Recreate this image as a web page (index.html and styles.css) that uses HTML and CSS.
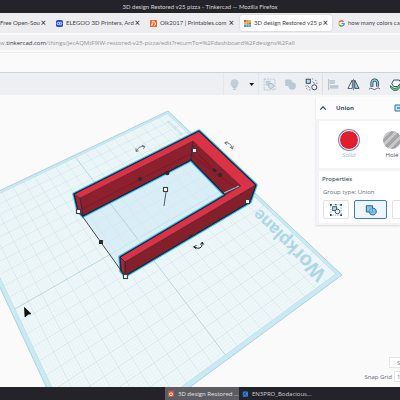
FILE: index.html
```html
<!DOCTYPE html>
<html lang="en">
<head>
<meta charset="utf-8">
<title>3D design Restored v25 pizza - Tinkercad</title>
<link rel="stylesheet" href="styles.css">
</head>
<body>
<header class="titlebar">3D design Restored v25 pizza - Tinkercad — Mozilla Firefox</header>
<nav class="tabs">
  <div class="tab tab-first"><a href="#">Free Open-Sou</a><button aria-label="Close">×</button></div>
  <div class="tab">
    <svg class="fav" viewBox="0 0 8 8"><rect width="8" height="8" rx="2" fill="#2450d8"/><path d="M3.8 2.7H2.6a1.3 1.3 0 000 2.6h1.2zM4.4 2.7h1a1.3 1.3 0 010 2.6h-1z" fill="none" stroke="#fff" stroke-width=".8"/></svg>
    <a href="#">ELEGOO 3D Printers, Ard</a><button aria-label="Close">×</button></div>
  <div class="tab">
    <svg class="fav" viewBox="0 0 8 8"><rect width="8" height="8" rx="1" fill="#f5652a"/><path d="M2.2 1.5h2l2 1.7v2L4.2 6.7M2 3.7l2-.6M2 6.7V5l2-.6" fill="none" stroke="#fff" stroke-width="1"/></svg>
    <a href="#">Olk2017 | Printables.com</a><button aria-label="Close">×</button></div>
  <div class="tab active">
    <svg class="fav" viewBox="0 0 8 8"><rect x="0" y="0" width="2.6" height="2.6" fill="#e8523f"/><rect x="2.7" y="0" width="2.6" height="2.6" fill="#f08a35"/><rect x="5.4" y="0" width="2.6" height="2.6" fill="#f4b13e"/><rect x="0" y="2.7" width="2.6" height="2.6" fill="#f2a53a"/><rect x="2.7" y="2.7" width="2.6" height="2.6" fill="#7cba55"/><rect x="5.4" y="2.7" width="2.6" height="2.6" fill="#e05a48"/><rect x="0" y="5.4" width="2.6" height="2.6" fill="#3f9bd8"/><rect x="2.7" y="5.4" width="2.6" height="2.6" fill="#3cae9c"/><rect x="5.4" y="5.4" width="2.6" height="2.6" fill="#52a8dd"/></svg>
    <a href="#">3D design Restored v25 p</a><button aria-label="Close">×</button></div>
  <div class="tab tab-last">
    <svg class="fav" viewBox="0 0 8 8"><g fill="none" stroke-width="1.4"><path d="M6.2 2A3 3 0 001.5 2.5" stroke="#ea4335"/><path d="M1.5 2.4a3 3 0 000 3.2" stroke="#fbbc05"/><path d="M1.5 5.5a3 3 0 004.4.8" stroke="#34a853"/><path d="M4.1 4H7a3 3 0 01-1.1 2.4" stroke="#4285f4"/></g></svg>
    <a href="#">how many colors can</a></div>
</nav>
<div class="address"><span>w.<b>tinkercad.com</b>/things/jecAQMtF9IW-restored-v25-pizza/edit?returnTo=%2Fdashboard%2Fdesigns%2Fall</span></div>
<div class="spacer"></div>
<div class="toolbar">
  <button class="tool tool-bulb" aria-label="Show all"><svg viewBox="0 0 14 14"><circle cx="7" cy="5.6" r="4.2" fill="#c3ced6"/><path d="M4.5 8.5h5L8.7 11H5.3zM5.5 11.5h3v1.3h-3z" fill="#bbc7d0"/></svg></button>
  <button class="tool tool-drop" aria-label="Visibility menu"><svg viewBox="0 0 14 14"><path d="M4.7 5.5h5L7.2 8.5z" fill="#111"/></svg></button>
  <button class="tool tool-group" aria-label="Group"><svg viewBox="0 0 14 14"><path d="M1.2 1.2h11.6v11.6H1.2z" fill="none" stroke="#b4c2cc" stroke-width="1" stroke-dasharray="2 1"/><rect x="3" y="3" width="5" height="5" fill="#c1cdd5"/><circle cx="8.6" cy="8.5" r="2.7" fill="#d7dfe4" stroke="#a9b9c4"/></svg></button>
  <button class="tool tool-union" aria-label="Union group"><svg viewBox="0 0 14 14"><rect x="1.3" y="1.7" width="7" height="7" rx="1" fill="#b9c8d2"/><circle cx="8.8" cy="8.7" r="4" fill="#b9c8d2"/></svg></button>
  <button class="tool tool-ungroup" aria-label="Ungroup"><svg viewBox="0 0 14 14"><rect x="1.3" y="1.3" width="4.4" height="4.4" fill="#aee0f5" stroke="#2b4053"/><circle cx="10" cy="10" r="2.7" fill="#f5f8fa" stroke="#2b4053"/><path d="M7.5 1h1.3M11 2l1.5 1.5M8 4l3 2M12.7 5v1.5M1 8v1.5M3 8l2 3M1.5 11l1 1.3M4.5 12.8H6" fill="none" stroke="#425668" stroke-width=".7"/></svg></button>
  <button class="tool tool-align" aria-label="Align"><svg viewBox="0 0 14 14"><path d="M1.8 1v12" stroke="#a9b9c4"/><rect x="3.2" y="2.5" width="5" height="3.5" fill="#c5d0d8" stroke="#afbec9" stroke-width=".7"/><rect x="3.2" y="7.7" width="9" height="3.7" fill="#b9c8d2"/></svg></button>
  <button class="tool" aria-label="Mirror"><svg viewBox="0 0 14 14"><path d="M5.7 2.2v9H1z" fill="#fff" stroke="#2b4053" stroke-width=".9"/><path d="M8.3 2.2v9H13z" fill="#8fd0ed" stroke="#2b4053" stroke-width=".9"/><path d="M7 .8v12.4" stroke="#2b4053" stroke-width=".6"/></svg></button>
  <button class="tool" aria-label="Cruise"><svg viewBox="0 0 14 14"><path d="M4.2 9.5V5.2a3 3 0 016 0v4" fill="none" stroke="#2b4053" stroke-width="3.2"/><path d="M4.2 9V5.2a3 3 0 016 0V9" fill="none" stroke="#87c8e8" stroke-width="1.5"/><path d="M1 12q2-2 4-.3t4-.2 4 .3" fill="none" stroke="#2b4053" stroke-width=".8"/></svg></button>
  <button class="tool" aria-label="Dimensions"><svg viewBox="0 0 14 14"><path d="M5 2.2h6l2 3-4 4H5L3 6z" fill="#fff" stroke="#2b4053"/><path d="M1.5 8.2l4 3.2 4-1 3-3.2.3 2-3.8 4-4 .3-3.2-2.8z" fill="#65c58c" stroke="#245c44" stroke-width=".8"/></svg></button>
</div>
<main class="stage">
  <svg class="scene" viewBox="0 95 400 292" preserveAspectRatio="xMinYMin slice" role="img" aria-label="Workplane with a red frame">
    <polygon points="168,111 342,275 83,466 -37,208" fill="#c9e9f3" stroke="#9dcbd9" stroke-width=".8"/>
    <polygon id="plane" fill="#eff7f9" stroke="#b5dce6" stroke-width=".6"/>
    <path id="fine" class="fine"/>
    <path id="coarse" class="coarse"/>
    <path id="axes" class="axes"/>
    <text class="plane-name" transform="translate(327 273) rotate(224)"><tspan class="s1">Wor</tspan><tspan class="s2">kpl</tspan><tspan class="s3">ane</tspan></text>
    <text class="plane-small" transform="translate(183 134) rotate(223)">Workplane</text>
    <polygon points="83,216 191,160 226,195 121,257 125,276" fill="#cfe9f4" opacity=".65"/>
    <path d="M101 192L137 238" class="axes"/>
    <path d="M74 194L199 131 256 185 250 202 125 276 121 271 120 257 225 195 191 160 83 216 78 211Z" fill="none" stroke="#27bfe9" stroke-width="3.4" stroke-linejoin="round"/>
    <g stroke="#19253f" stroke-width=".7" stroke-linejoin="round">
      <polygon points="80,198 193,141 191,160 83,216" fill="#8c202c"/>
      <polygon points="74,194 80,198 83,216 78,211" fill="#a12733"/>
      <polygon points="193,141 241,186 225,195 191,160" fill="#8b1f2b"/>
      <path d="M74 194L199 131 256 185 125 262 120 257 241 186 193 141 80 198Z" fill="#dc3246" stroke="#7b1c2c"/>
      <polygon points="125,262 256,185 250,202 125,276" fill="#84202a" stroke-width=".5"/>
      <polygon points="120,257 125,262 125,276 121,271" fill="#a32734"/>
      <path d="M78 211L74 194 199 131 256 185 250 202 125 276 121 271 120 257 225 195M83 216L191 160 225 195M83 216l-5-5" fill="none" stroke-width="1.1"/>
    </g>
    <path d="M224 193l15-7" stroke="#65cce8" stroke-width="1.2"/>
    <path d="M82 209L190 154 236 188" fill="none" stroke="#5d1721" stroke-width=".6" opacity=".7"/>
    <path d="M80 213L125 276" stroke="#333" stroke-width=".9"/>
    <path d="M166 192l-2 14" stroke="#333" stroke-width=".8"/>
    <path d="M199 155l13 13" stroke="#4c121b" stroke-width=".7" stroke-dasharray="2 1"/>
    <g fill="#2b2b2d"><rect x="99" y="240" width="4" height="4"/><circle cx="140" cy="179" r="2"/><circle cx="167.3" cy="173" r="2.2"/><path d="M188 237l4-3 0 3z"/><circle cx="220" cy="175" r="2"/><path d="M212 168l4 1 1 3-4-1z"/></g>
    <g fill="#fff" stroke="#3d3d3f" stroke-width="1.1"><rect x="76.5" y="209.5" width="4" height="4"/><rect x="123.5" y="274.500" width="4" height="4"/><rect x="245.5" y="199.5" width="4" height="4"/><rect x="192.5" y="148.5" width="4" height="4"/><rect x="163.5" y="187.5" width="4" height="4"/></g>
    <g fill="none" stroke="#555" stroke-width=".8"><path d="M136.500 151q2-5 7.500-4.500M136 148.500v3l2.500-.7M141.800 145.300l3 1-1.200 2.500"/><path d="M225.500 143q5-1 6.500 5M227.500 141.500l-2.800 1.400 2 2M230 147l2.400 2 .9-3"/></g>
    <path d="M194.5 247q7 4 8-4M196.500 245.500l-3 1.300 2.800 2M200.500 244.500l1.700-2.500 1.500 2.500" fill="none" stroke="#222"/>
    <path d="M24.500 307.500l6.500 6.300-2.700.4L25 317z" fill="#111" stroke="#111" stroke-width=".8"/>
  </svg>
  <aside class="panel">
    <div class="panel-head">
      <button class="chevron" aria-label="Collapse"><svg viewBox="0 0 8 8"><path d="M1.2 5.6L4 2.800l2.800 2.800" fill="none" stroke="#30475e" stroke-width="1.2"/></svg></button>
      <h2>Union</h2>
      <button class="lock" aria-label="Lock"><svg viewBox="0 0 6 8"><path d="M7 1H1v6h6" fill="#c6e8f7" stroke="#2d6fa3"/><path d="M3 3h3v2H3z" fill="#5b9cc7"/></svg></button>
    </div>
    <div class="card swatches">
      <button class="swatch"><span class="dot solid"></span><span class="name chosen">Solid</span></button>
      <button class="swatch"><span class="dot hole"></span><span class="name">Hole</span></button>
    </div>
    <div class="card props">
      <h3>Properties</h3>
      <p>Group type: Union</p>
      <div class="types">
        <button aria-label="Group"><svg viewBox="0 0 14 14"><path d="M1 1h12v12H1z" fill="none" stroke="#58a9d4" stroke-dasharray="1.5 1.5"/><path d="M0 0h2v2H0zM12 0h2v2h-2zM0 12h2v2H0zM12 12h2v2h-2zM6 0h1.5v1.5H6z" fill="#2b4053"/><rect x="3.2" y="3.2" width="4.6" height="4.6" fill="#b5def2" stroke="#2b4053"/><circle cx="8.7" cy="8.7" r="2.7" fill="#f3fafe" stroke="#2b4053"/></svg></button>
        <button class="picked" aria-label="Union"><svg viewBox="0 0 14 14"><path d="M1.500 2h7.300v2.800A4 4 0 118 12.600 4 4 0 014.800 9.300H1.500z" fill="#82c3e8" stroke="#25507a"/><path d="M8.800 4.800a4 4 0 00-4 4.500h4z" fill="none" stroke="#4289b8" stroke-width=".7"/></svg></button>
        <button aria-label="Intersection"><svg viewBox="0 0 14 14"><path d="M2 12V4.500h7" fill="none" stroke="#9aaab5" stroke-dasharray="1.500 1"/><path d="M4 10l3-3" stroke="#9aaab5"/></svg></button>
      </div>
    </div>
  </aside>
  <div class="grid-tools">
    <button class="field settings">Settings</button>
    <div class="snap"><label for="snap">Snap Grid</label><input id="snap" class="field" value="1.0 mm"></div>
  </div>
</main>
<footer class="taskbar">
  <button class="task current"><svg viewBox="0 0 8 8"><rect width="8" height="8" rx="1.5" fill="#e2503e"/><circle cx="4" cy="4.3" r="2" fill="none" stroke="#fff" stroke-width="1.3"/><path d="M4 1v2" stroke="#e2503e"/></svg><span>3D design Restored …</span></button>
  <button class="task"><svg viewBox="0 0 8 8"><rect x="1" y=".5" width="7" height="7" rx="1" fill="#2f82e6"/><path d="M6 2L3 4l3 2M0 2.500h2M0 5.500h2" fill="none" stroke="#12345c" stroke-width="1"/></svg><span>EN3PRO_Bodacious…</span></button>
</footer>
<script src="grid.js"></script>
</body>
</html>
```
FILE: styles.css
```css
* { box-sizing: border-box; }
html, body { height: 100%; }
body {
  margin: 0;
  display: flex;
  flex-direction: column;
  overflow: hidden;
  background: #fafafb;
  color: #45454a;
  font: 6px/8px "Open Sans", "Noto Sans", sans-serif;
}
button { margin: 0; padding: 0; border: 0; background: none; color: inherit; font: inherit; }
a { color: inherit; text-decoration: none; }
svg { display: block; flex: none; }
h2, h3, p { margin: 0; }

.titlebar {
  flex: none;
  height: 13px;
  background: #242329;
  color: #d4d4d6;
  font-family: Lato, sans-serif;
  line-height: 13px;
  text-align: center;
}
.tabs {
  flex: none;
  display: grid;
  grid-template-columns: 50px 94px 94px 98px 1fr;
  height: 20px;
  padding: 2px 0;
  background: #ededf0;
  font-family: Lato, sans-serif;
}
.tab {
  display: flex;
  align-items: center;
  gap: 3px;
  min-width: 0;
  padding: 0 4px 0 6px;
}
.tab a { flex: 1; min-width: 0; white-space: nowrap; }
.tab button { font-size: 9px; color: #222; }
.tab-first { padding: 0 4px 0 0; }
.tab-last { padding: 0 0 0 2px; }
.tab.active { margin: 0 4px 0 2px; padding: 0 4px; background: #fff; border-radius: 3px; box-shadow: 0 0 2px #bbb; }
.fav { width: 7px; height: 7px; }
.address {
  flex: none;
  height: 19px;
  padding: 2px 0;
  background: #fafafb;
  color: #929297;
  white-space: nowrap;
}
.address span { display: block; height: 15px; line-height: 17px; background: #f1f1f3; }
.address b { color: #333338; font-weight: 400; }
.spacer { flex: none; height: 20px; border-top: 1px solid #ececee; }
.toolbar {
  flex: none;
  display: flex;
  justify-content: flex-end;
  height: 23px;
  margin-right: -6px;
  border-top: 1px solid #cdd3d9;
  background: #eeeff2;
}
.tool { display: grid; place-items: center; width: 21px; }
.tool svg { width: 13px; height: 13px; }
.tool-bulb { border-left: 1px solid #e3e6ea; }
.tool-drop { width: 14px; }
.tool-group { border-left: 1px solid #e3e6ea; width: 22px; }
.tool-align { border-left: 1px solid #dde1e5; }

.stage { flex: 1; min-height: 0; position: relative; overflow: hidden; background: #fafafb; }
.scene { width: 100%; height: 100%; }
.fine { fill: none; stroke: #bcdfe8; stroke-width: 1; opacity: .1; }
.coarse { fill: none; stroke: #b2d0d8; stroke-width: 1; opacity: .25; }
.axes { fill: none; stroke: #9fc4cf; stroke-width: 1; opacity: .5; }
.plane-name { fill: #acd7e3; font-family: "Liberation Sans", sans-serif; font-weight: 700; }
.s1 { font-size: 20px; }
.s2 { font-size: 18px; }
.s3 { font-size: 17px; }
.plane-small { fill: #b9dbe5; font: 700 4px "Liberation Sans", sans-serif; }

.panel {
  position: absolute;
  top: 2px;
  right: 0;
  width: 84px;
  padding-bottom: 2px;
  overflow: hidden;
  background: #f3f4f5;
  box-shadow: 0 1px 2px #d5d8da;
}
.panel-head { display: flex; align-items: center; height: 22px; padding: 0 0 0 3px; background: #fcfcfd; }
.panel-head h2 { flex: 1; padding-left: 9px; font-size: 6px; font-weight: 700; color: #3c4d60; }
.chevron svg { width: 8px; height: 8px; }
.lock svg { width: 6px; height: 8px; }
.card { background: #fff; margin-left: 3px; }
.swatches { display: flex; gap: 19px; height: 47px; margin-top: 2px; padding: 9px 0 0 18px; }
.swatch { display: flex; flex: none; flex-direction: column; align-items: center; gap: 1px; width: 24px; }
.dot { width: 20px; height: 20px; border-radius: 50%; border: 1px solid #fff; }
.solid { background: #e41d2d; box-shadow: 0 0 0 1px #6b8dd0; }
.hole { background: repeating-linear-gradient(135deg, #a6a6a8 0 3px, #c8c8ca 3px 6px); }
.name { color: #46515e; }
.chosen { color: #8fbbe6; }
.props { margin-top: 3px; padding: 4px 0 4px 3px; }
.props h3 { font-size: 6px; font-weight: 600; color: #4b5663; }
.props p { padding: 5px 0 4px 1px; color: #667079; }
.types { display: flex; gap: 5px; padding-left: 1px; }
.types button { display: grid; flex: none; place-items: center; width: 26px; height: 19px; border: 1px solid #e0e4e8; border-radius: 2px; }
.types .picked { width: 33px; border-color: #4179c4; background: #eef6fd; }
.types svg { width: 12px; height: 12px; }

.grid-tools { position: absolute; right: 0; bottom: 5px; display: grid; gap: 3px; width: 36px; overflow: hidden; justify-items: end; }
.field { height: 11px; border: 1px solid #e3e5e7; border-right: 0; background: #fff; color: #777d86; font: inherit; overflow: hidden; text-align: left; }
.settings { width: 11px; padding: 0 0 0 7px; }
.snap { display: flex; align-items: center; gap: 2px; white-space: nowrap; color: #666d7b; }
.snap .field { width: 6px; padding: 0 0 0 2px; }
.snap label { flex: none; }

.taskbar { flex: none; display: flex; justify-content: center; height: 13px; padding-left: 78px; background: #242329; color: #cfcfd2; }
.task { display: flex; align-items: center; gap: 4px; width: 74px; padding-left: 3px; white-space: nowrap; }
.task svg { width: 6px; height: 6px; }
.current { background: #5c5c61; color: #e6e6e8; }
```
FILE: grid.js
```js
// Perspective map from the unit square to the four workplane corners.
const [p0, p1, p2, p3] = [[168, 111], [342, 275], [83, 466], [-37, 208]];
const dx1 = p1[0] - p2[0], dx2 = p3[0] - p2[0], sx = p0[0] - p1[0] + p2[0] - p3[0];
const dy1 = p1[1] - p2[1], dy2 = p3[1] - p2[1], sy = p0[1] - p1[1] + p2[1] - p3[1];
const det = dx1 * dy2 - dx2 * dy1;
const g = (sx * dy2 - dx2 * sy) / det;
const h = (dx1 * sy - sx * dy1) / det;
function project(u, v) {
  const w = g * u + h * v + 1;
  return [0, 1].map(i => (((p1[i] - p0[i] + g * p1[i]) * u + (p3[i] - p0[i] + h * p3[i]) * v + p0[i]) / w).toFixed(2)).join(' ');
}
const lo = 0.014, hi = 0.986;
function lines(count) {
  let d = '';
  for (let i = 1; i < count; i++) {
    const t = lo + (hi - lo) * i / count;
    d += `M${project(t, lo)}L${project(t, hi)}M${project(lo, t)}L${project(hi, t)}`;
  }
  return d;
}
document.getElementById('plane').setAttribute('points', [project(lo, lo), project(hi, lo), project(hi, hi), project(lo, hi)].join(' '));
document.getElementById('fine').setAttribute('d', lines(100));
document.getElementById('coarse').setAttribute('d', lines(20));
document.getElementById('axes').setAttribute('d', lines(2));
```
